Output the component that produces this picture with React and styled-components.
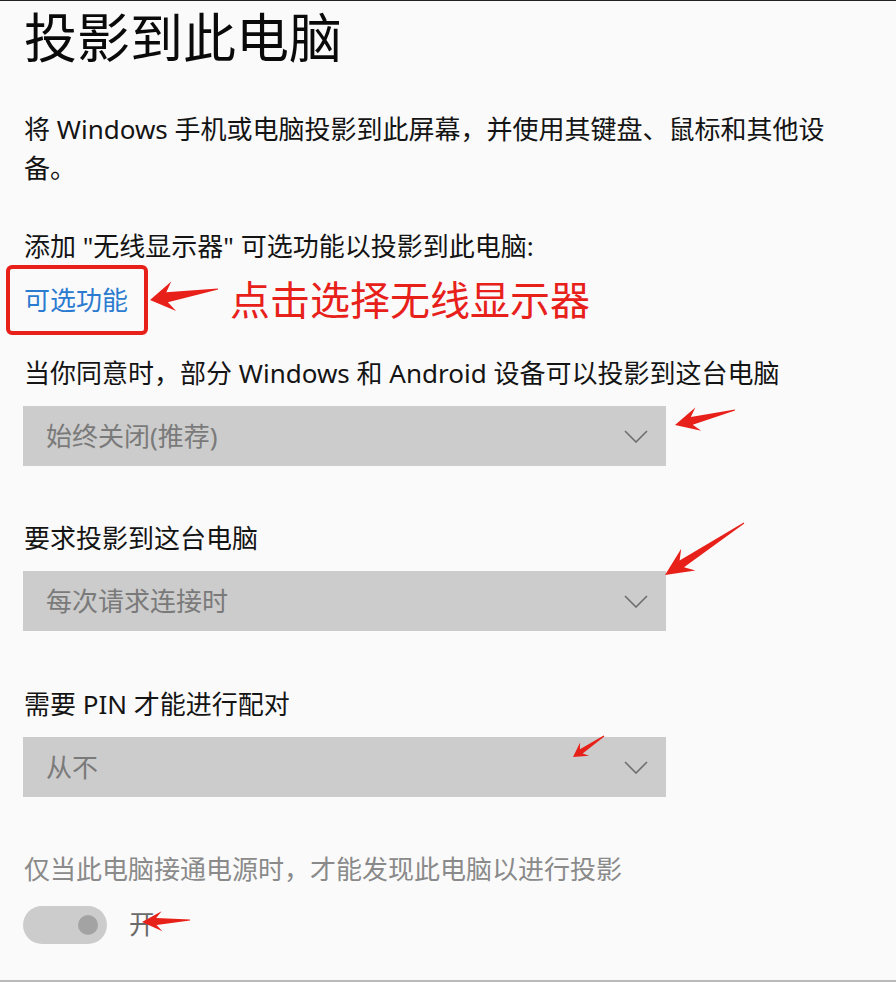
import styled, { createGlobalStyle } from 'styled-components'

const GlobalStyle = createGlobalStyle`
  html, body {
    margin: 0;
    padding: 0;
    background: #fafafa;
  }
  body {
    font-family: "Noto Sans", "Noto Sans CJK SC", sans-serif;
  }
`

const RED = '#e8201a'

function arrowPoints(tip, tail, headLen, headW, neckW, tailW = 0.5) {
  const dx = tail[0] - tip[0]
  const dy = tail[1] - tip[1]
  const len = Math.hypot(dx, dy)
  const ux = dx / len
  const uy = dy / len
  const px = -uy
  const py = ux
  const base = [tip[0] + ux * headLen, tip[1] + uy * headLen]
  const notch = [tip[0] + ux * headLen * 0.72, tip[1] + uy * headLen * 0.72]
  const pts = [
    tip,
    [base[0] + px * headW, base[1] + py * headW],
    [notch[0] + px * neckW, notch[1] + py * neckW],
    [tail[0] + px * tailW, tail[1] + py * tailW],
    [tail[0] - px * tailW, tail[1] - py * tailW],
    [notch[0] - px * neckW, notch[1] - py * neckW],
    [base[0] - px * headW, base[1] - py * headW],
  ]
  return pts.map((p) => p.map((v) => v.toFixed(1)).join(',')).join(' ')
}

const overlayArrows = [
  { tip: [675, 424], tail: [735, 409], head: 24, w: 12, n: 4 },
  { tip: [665, 574], tail: [744, 522], head: 28, w: 13, n: 4 },
  { tip: [573, 756], tail: [604, 735], head: 14, w: 8, n: 2.5 },
  { tip: [142, 921], tail: [190, 919], head: 20, w: 10, n: 3.5 },
]

const Chevron = () => (
  <svg width="24" height="13" viewBox="0 0 24 13">
    <polyline points="1,1 12,12 23,1" fill="none" stroke="#6e6e6e" strokeWidth="1.6" />
  </svg>
)

const Dropdown = ({ value }) => (
  <Select>
    <SelectValue>{value}</SelectValue>
    <Chevron />
  </Select>
)

export default function App() {
  return (
    <Page>
      <GlobalStyle />
      <Title>投影到此电脑</Title>
      <Description>将 Windows 手机或电脑投影到此屏幕，并使用其键盘、鼠标和其他设备。</Description>
      <Text $top={39}>添加 "无线显示器" 可选功能以投影到此电脑:</Text>
      <AnnotRow>
        <Highlight>
          <Link>可选功能</Link>
        </Highlight>
        <svg width="72" height="48" viewBox="0 0 72 48">
          <polygon points={arrowPoints([2, 24], [70, 13], 24, 15, 5)} fill={RED} />
        </svg>
        <Note>点击选择无线显示器</Note>
      </AnnotRow>
      <Text $top={19}>当你同意时，部分 Windows 和 Android 设备可以投影到这台电脑</Text>
      <Dropdown value="始终关闭(推荐)" />
      <Text $top={53}>要求投影到这台电脑</Text>
      <Dropdown value="每次请求连接时" />
      <Text $top={54}>需要 PIN 才能进行配对</Text>
      <Dropdown value="从不" />
      <Text $top={53} $muted>仅当此电脑接通电源时，才能发现此电脑以进行投影</Text>
      <ToggleRow>
        <Toggle>
          <Knob />
        </Toggle>
        <ToggleLabel>开</ToggleLabel>
      </ToggleRow>
      <Overlay width="896" height="982" viewBox="0 0 896 982">
        {overlayArrows.map((a, i) => (
          <polygon key={i} points={arrowPoints(a.tip, a.tail, a.head, a.w, a.n)} fill={RED} />
        ))}
      </Overlay>
    </Page>
  )
}

const Page = styled.div`
  position: relative;
  box-sizing: border-box;
  width: 896px;
  height: 982px;
  padding-left: 24px;
  border-top: 1px solid #222;
  border-bottom: 2px solid #b9b9b9;
  background: #fafafa;
  overflow: hidden;
`

const Title = styled.h1`
  margin: 10px 0 0;
  font-size: 53px;
  line-height: 53px;
  font-weight: 400;
  color: #0a0a0a;
`

const Description = styled.p`
  margin: 46px 0 0;
  width: 815px;
  font-size: 26px;
  line-height: 39px;
  color: #141414;
`

const Text = styled.div`
  margin-top: ${(p) => p.$top}px;
  font-size: 26px;
  line-height: 39px;
  color: ${(p) => (p.$muted ? '#8a8a8a' : '#141414')};
  white-space: nowrap;
`

const AnnotRow = styled.div`
  display: flex;
  align-items: center;
  margin: 0 0 0 -18px;
  height: 70px;
  margin-top: -1px;
`

const Highlight = styled.div`
  box-sizing: border-box;
  display: flex;
  align-items: center;
  height: 70px;
  padding: 0 16px 0 14px;
  border: 4px solid ${RED};
  border-radius: 6px;
`

const Link = styled.span`
  font-size: 26px;
  line-height: 39px;
  color: #2b7bd0;
`

const Note = styled.span`
  margin-left: 10px;
  font-size: 40px;
  line-height: 48px;
  color: ${RED};
`

const Select = styled.div`
  box-sizing: border-box;
  display: flex;
  align-items: center;
  justify-content: space-between;
  width: 643px;
  height: 60px;
  margin-top: 13px;
  margin-left: -1px;
  padding: 0 18px 0 23px;
  background: #cccccc;
`

const SelectValue = styled.span`
  font-size: 26px;
  line-height: 39px;
  color: #7a7a7a;
`

const ToggleRow = styled.div`
  display: flex;
  align-items: center;
  gap: 22px;
  margin-top: 16px;
`

const Toggle = styled.div`
  box-sizing: border-box;
  display: flex;
  align-items: center;
  justify-content: flex-end;
  width: 84px;
  height: 38px;
  padding-right: 9px;
  margin-left: -1px;
  border-radius: 19px;
  background: #cccccc;
`

const Knob = styled.div`
  width: 20px;
  height: 20px;
  border-radius: 50%;
  background: #a3a3a3;
`

const ToggleLabel = styled.span`
  font-size: 26px;
  line-height: 39px;
  color: #6a6a6a;
`

const Overlay = styled.svg`
  position: absolute;
  left: 0;
  top: 0;
  pointer-events: none;
`
